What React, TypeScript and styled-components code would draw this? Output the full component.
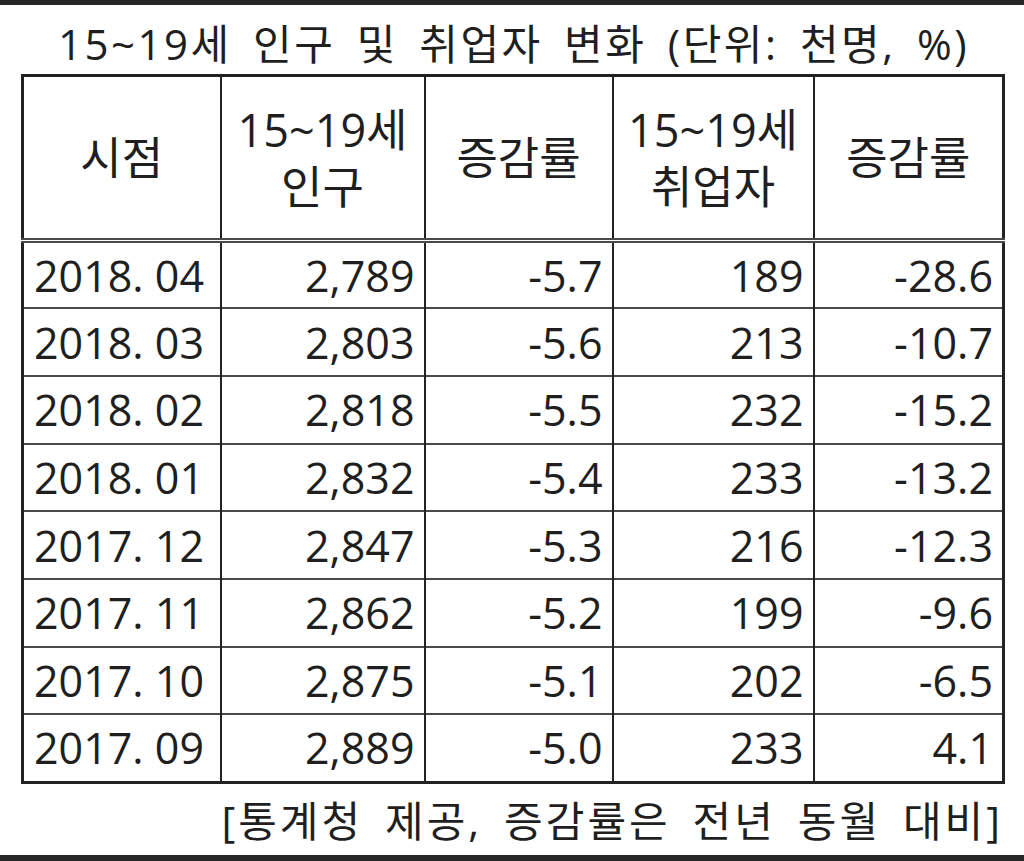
import React from 'react'
import styled, { createGlobalStyle } from 'styled-components'

const GlobalStyle = createGlobalStyle`
  html, body {
    margin: 0;
    padding: 0;
    background: #ffffff;
  }
  body {
    font-family: "Open Sans", "Noto Sans CJK KR", sans-serif;
    color: #1f1f1f;
  }
`

const headers = [
  ['시점'],
  ['15~19세', '인구'],
  ['증감률'],
  ['15~19세', '취업자'],
  ['증감률'],
]

const rows = [
  ['2018. 04', '2,789', '-5.7', '189', '-28.6'],
  ['2018. 03', '2,803', '-5.6', '213', '-10.7'],
  ['2018. 02', '2,818', '-5.5', '232', '-15.2'],
  ['2018. 01', '2,832', '-5.4', '233', '-13.2'],
  ['2017. 12', '2,847', '-5.3', '216', '-12.3'],
  ['2017. 11', '2,862', '-5.2', '199', '-9.6'],
  ['2017. 10', '2,875', '-5.1', '202', '-6.5'],
  ['2017. 09', '2,889', '-5.0', '233', '4.1'],
]

const colWidths = [198, 204, 188, 201, 190]

export default function App() {
  return (
    <>
      <GlobalStyle />
      <Page>
        <Title>15~19세 인구 및 취업자 변화 (단위: 천명, %)</Title>
        <Table>
          <colgroup>
            {colWidths.map((w, i) => (
              <col key={i} style={{ width: w }} />
            ))}
          </colgroup>
          <thead>
            <tr>
              {headers.map((lines, i) => (
                <HeadCell key={i}>
                  {lines.map((l, j) => (
                    <HeadLine key={j}>{l}</HeadLine>
                  ))}
                </HeadCell>
              ))}
            </tr>
          </thead>
          <tbody>
            {rows.map((r) => (
              <Row key={r[0]}>
                {r.map((v, i) => (
                  <Cell key={i} $first={i === 0}>
                    {v}
                  </Cell>
                ))}
              </Row>
            ))}
          </tbody>
        </Table>
        <Source>[통계청 제공, 증감률은 전년 동월 대비]</Source>
      </Page>
    </>
  )
}

const Page = styled.div`
  width: 1024px;
  height: 861px;
  box-sizing: border-box;
  border-top: 5px solid #262626;
  border-bottom: 6px solid #262626;
  background: #ffffff;
  display: flex;
  flex-direction: column;
`

const Title = styled.div`
  height: 69px;
  box-sizing: border-box;
  padding-top: 8px;
  padding-left: 3px;
  display: flex;
  align-items: center;
  justify-content: center;
  font-size: 42px;
  line-height: 1;
  letter-spacing: 2.5px;
  word-spacing: 8px;
  white-space: nowrap;
`

const Table = styled.table`
  margin-left: 21px;
  width: 981px;
  table-layout: fixed;
  border-collapse: collapse;
  border: 3px solid #222222;
`

const HeadCell = styled.th`
  height: 161px;
  padding: 0;
  font-weight: 400;
  font-size: 45px;
  text-align: center;
  vertical-align: middle;
  border-left: 2px solid #222222;
  border-right: 2px solid #222222;
  border-bottom: 5px double #4a4a4a;
`

const HeadLine = styled.div`
  line-height: 57px;
  white-space: nowrap;
`

const Row = styled.tr`
  height: 67.7px;
`

const Cell = styled.td<{ $first?: boolean }>`
  padding: 0 ${(p) => (p.$first ? '0' : '9px')} 0 ${(p) => (p.$first ? '10px' : '0')};
  font-size: 43px;
  line-height: 1;
  text-align: ${(p) => (p.$first ? 'left' : 'right')};
  vertical-align: middle;
  white-space: nowrap;
  border-left: 2px solid #222222;
  border-right: 2px solid #222222;
  border-top: 2px solid #4a4a4a;
`

const Source = styled.div`
  flex: 1;
  display: flex;
  align-items: center;
  justify-content: flex-end;
  padding-right: 21px;
  padding-top: 4px;
  font-size: 42px;
  line-height: 1;
  letter-spacing: 3px;
  word-spacing: 8px;
  white-space: nowrap;
`
